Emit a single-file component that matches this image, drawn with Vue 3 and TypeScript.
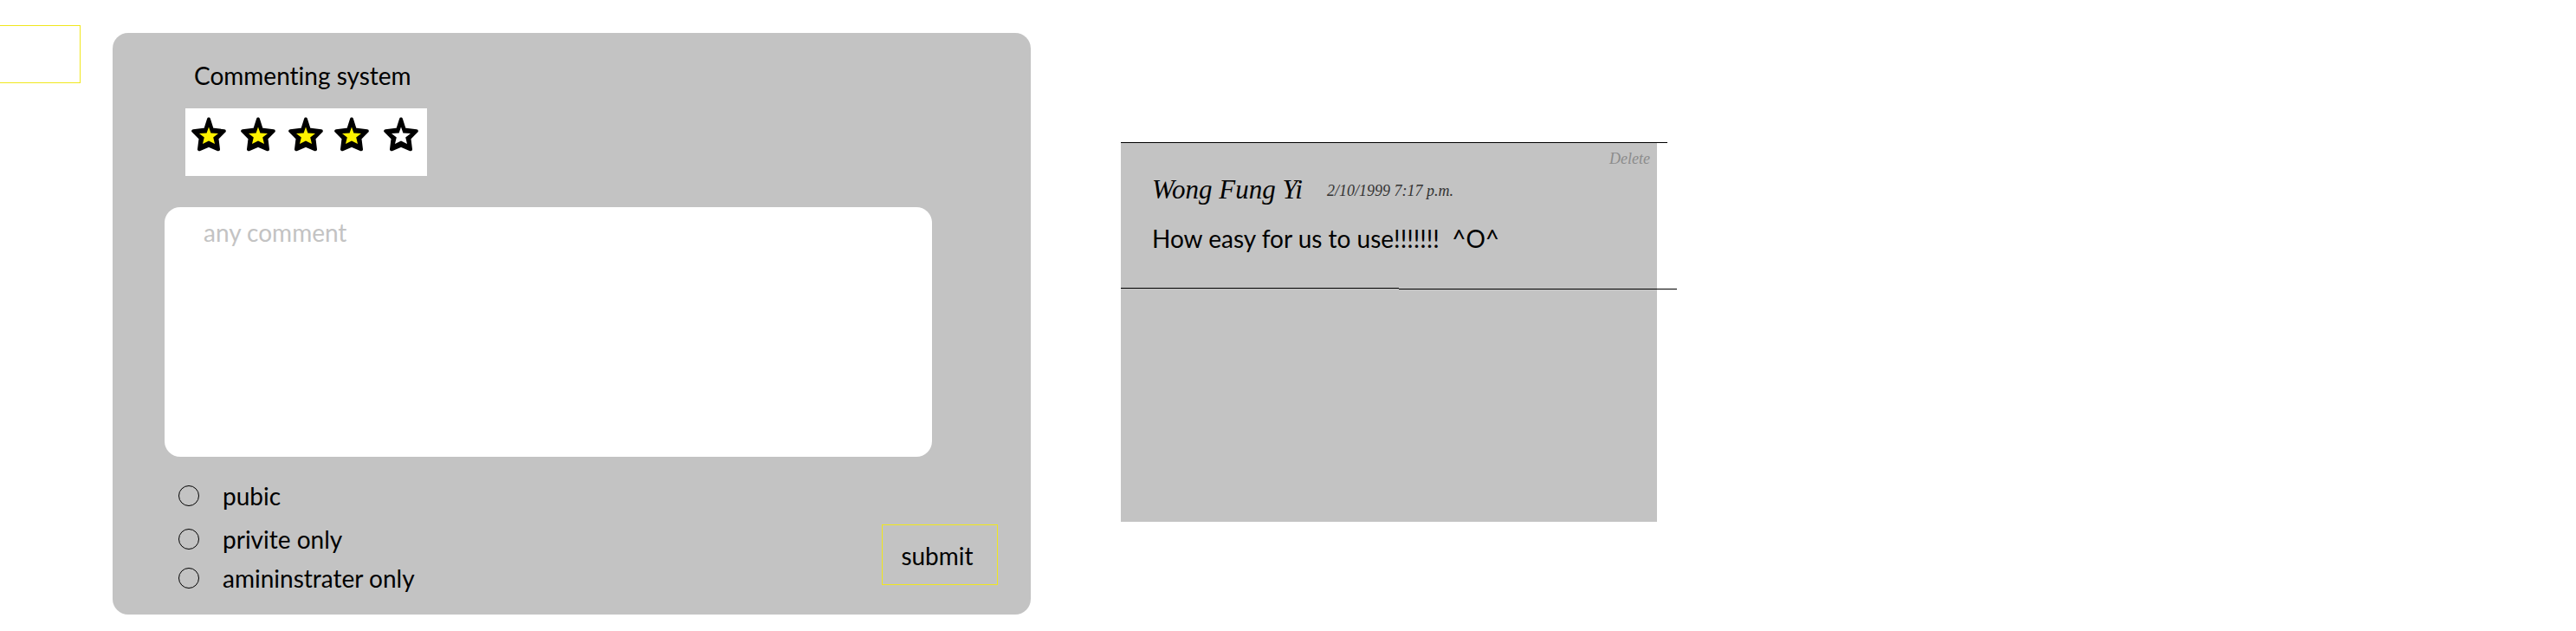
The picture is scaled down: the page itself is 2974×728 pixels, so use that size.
<script setup lang="ts">
import { ref } from 'vue'

interface Visibility {
  id: string
  label: string
}

const stars: number[] = [1, 2, 3, 4, 5]
const rating = ref<number>(4)
const draft = ref<string>('')
const chosen = ref<string>('')

const options: Visibility[] = [
  { id: 'public', label: 'pubic' },
  { id: 'private', label: 'privite only' },
  { id: 'admin', label: 'amininstrater only' },
]

const comment = {
  author: 'Wong Fung Yi',
  date: '2/10/1999 7:17 p.m.',
  text: 'How easy for us to use!!!!!!!\u00a0 ^O^',
}
</script>

<template>
  <main class="page">
    <div class="side-box" aria-hidden="true"></div>

    <form class="card" @submit.prevent>
      <h1 class="title">Commenting system</h1>

      <div class="rating" role="group" aria-label="Rating">
        <button
          v-for="n in stars"
          :key="n"
          type="button"
          class="star"
          :aria-label="`${n} stars`"
          @click="rating = n"
        >
          <svg viewBox="0 0 40 40" width="40" height="40" aria-hidden="true">
            <path
              class="star-edge"
              d="M20 2.5 L23.8 14.6 L37.8 16.2 L29.4 24.5 L31 37.3 L20 32.6 L9 37.3 L10.6 24.5 L2.2 16.2 L16.2 14.6 Z"
            />
            <path
              :class="n <= rating ? 'star-on' : 'star-off'"
              d="M20 11.5 L22.4 18.6 L31 19 L25.2 23.6 L27 31 L20 27.6 L13 31 L14.8 23.6 L9 19 L17.6 18.6 Z"
            />
          </svg>
        </button>
      </div>

      <textarea v-model="draft" class="comment-box" placeholder="any comment" aria-label="any comment"></textarea>

      <div class="bottom">
        <div class="options" role="radiogroup" aria-label="Visibility">
          <label v-for="o in options" :key="o.id" class="option">
            <input v-model="chosen" type="radio" name="visibility" :value="o.id" />
            <span>{{ o.label }}</span>
          </label>
        </div>
        <button type="submit" class="submit">submit</button>
      </div>
    </form>

    <section class="comments">
      <div class="rule top"></div>
      <article class="entry">
        <button type="button" class="delete">Delete</button>
        <header class="meta">
          <span class="author">{{ comment.author }}</span>
          <time class="date">{{ comment.date }}</time>
        </header>
        <p class="text">{{ comment.text }}</p>
      </article>
      <div class="rule split"><span></span><span></span></div>
    </section>
  </main>
</template>

<style>
body {
  margin: 0;
  background: #fff;
}
</style>

<style scoped>
.page {
  display: grid;
  grid-template-columns: 93fr 37fr 1060fr 104fr 619fr 1061fr;
  align-items: start;
  min-height: 100vh;
  overflow: hidden;
  color: #000;
  font-family: Lato, "Open Sans", sans-serif;
  font-size: 28px;
  font-variant-ligatures: none;
  line-height: 36px;
}

.page *,
.page {
  box-sizing: border-box;
}

button,
textarea {
  font: inherit;
  color: inherit;
}

button {
  padding: 0;
  border: 0;
  background: none;
}

.side-box {
  grid-column: 1;
  height: 67px;
  margin-top: 29px;
  border: 1px solid #f0e71e;
  border-left: 0;
}

.card {
  grid-column: 3;
  min-width: 0;
  margin-top: 38px;
  padding: 31px 38px 22px 60px;
  border-radius: 18px;
  background: #c3c3c3;
}

.title {
  margin: 0 0 20px 34px;
  font-size: 28px;
  font-weight: 400;
  line-height: 36px;
}

.rating {
  display: grid;
  grid-template-columns: 54px 60px 50px 56px 58px;
  width: max-content;
  height: 78px;
  margin-left: 24px;
  padding: 10px 1px 0 0;
  align-items: start;
  background: #fff;
}

.star {
  display: flex;
  justify-content: center;
}

.star-edge {
  fill: #000;
  stroke: #000;
  stroke-width: 4;
  stroke-linejoin: round;
}

.star-on {
  fill: #fff200;
}

.star-off {
  fill: #fff;
}

.comment-box {
  display: block;
  width: calc(100% - 76px);
  height: 288px;
  margin-top: 36px;
  padding: 11px 45px;
  border: 0;
  border-radius: 18px;
  background: #fff;
  outline: none;
  resize: none;
}

.comment-box::placeholder {
  color: #c3c3c3;
  opacity: 1;
}

.bottom {
  display: flex;
  justify-content: space-between;
  align-items: flex-end;
  padding-top: 20px;
}

.options {
  display: grid;
  grid-template-rows: 50px 50px 40px;
  margin-left: 16px;
}

.option {
  display: flex;
  align-items: center;
  gap: 27px;
}

.option input {
  appearance: none;
  width: 24px;
  height: 24px;
  margin: 0;
  border: 1px solid #000;
  border-radius: 50%;
}

.option input:checked {
  background: radial-gradient(#000 40%, transparent 45%);
}

.submit {
  width: 134px;
  height: 70px;
  margin-bottom: 12px;
  padding: 2px 6px 0 0;
  border: 1px solid #f0e71e;
}

.comments {
  grid-column: 5;
  min-width: 0;
  min-height: 438px;
  margin-top: 164px;
  background: #c3c3c3;
}

.rule.top {
  height: 1px;
  margin-right: -12px;
  background: #000;
}

.rule.split {
  display: flex;
  height: 2px;
  margin-right: -23px;
}

.rule.split span {
  flex: 1;
  height: 1px;
  background: #000;
}

.rule.split span:last-child {
  align-self: flex-end;
}

.entry {
  display: flex;
  flex-direction: column;
  height: 167px;
  padding: 6px 8px 0 36px;
}

.delete,
.meta {
  font-family: "Liberation Serif", serif;
  font-style: italic;
}

.delete {
  align-self: flex-end;
  color: #8c8c8c;
  font-size: 18px;
  line-height: 24px;
}

.meta {
  display: flex;
  align-items: center;
  gap: 28px;
  margin-top: 2px;
}

.author {
  font-size: 31px;
  line-height: 44px;
}

.date {
  padding-top: 2px;
  color: #333;
  font-size: 18px;
}

.text {
  margin: 16px 0 0;
  white-space: nowrap;
}
</style>
